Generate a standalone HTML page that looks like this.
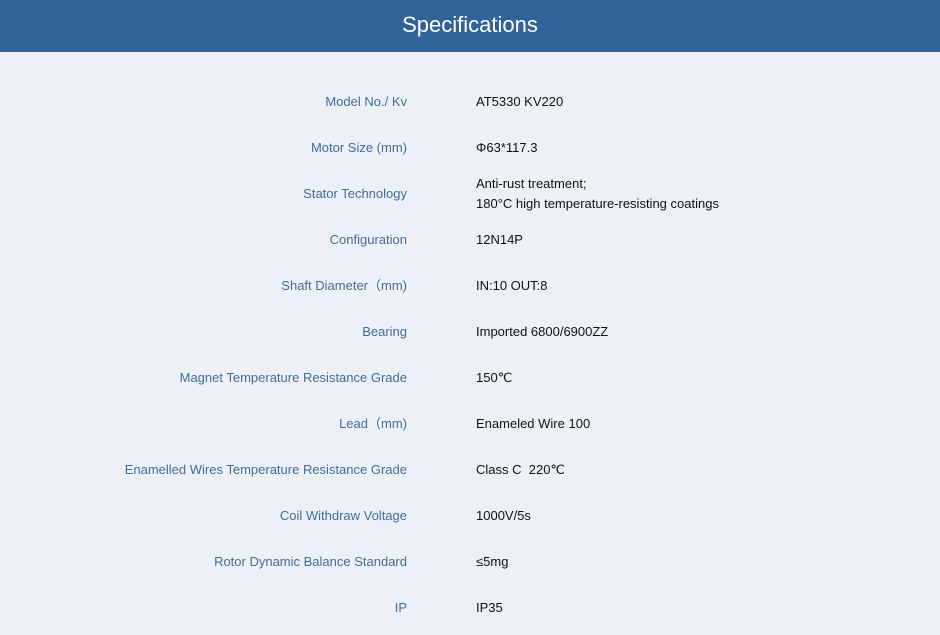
<!DOCTYPE html>
<html><head><style>
body{margin:0;width:940px;height:635px;background:#edf1f7;font-family:"Liberation Sans",sans-serif;overflow:hidden;position:relative}
.h{height:52px;background:#30639a;color:#fff;text-align:center;font-size:22px;line-height:50px}
.r{position:absolute;left:0;width:940px;height:20px;font-size:13px;line-height:20px}
.l{position:absolute;right:533px;color:#446c96;white-space:nowrap}
.v{position:absolute;left:476px;color:#111;white-space:nowrap}
</style></head><body>
<div class="h">Specifications</div>
<div class="r" style="top:92px"><span class="l">Model No./ Kv</span><span class="v">AT5330 KV220</span></div>
<div class="r" style="top:138px"><span class="l">Motor Size (mm)</span><span class="v">Φ63*117.3</span></div>
<div class="r" style="top:184px"><span class="l">Stator Technology</span><span class="v" style="top:-10px">Anti-rust treatment;</span><span class="v" style="top:10px">180°C high temperature-resisting coatings</span></div>
<div class="r" style="top:230px"><span class="l">Configuration</span><span class="v">12N14P</span></div>
<div class="r" style="top:276px"><span class="l">Shaft Diameter（mm)</span><span class="v">IN:10 OUT:8</span></div>
<div class="r" style="top:322px"><span class="l">Bearing</span><span class="v">Imported 6800/6900ZZ</span></div>
<div class="r" style="top:368px"><span class="l">Magnet Temperature Resistance Grade</span><span class="v">150℃</span></div>
<div class="r" style="top:414px"><span class="l">Lead（mm)</span><span class="v">Enameled Wire 100</span></div>
<div class="r" style="top:460px"><span class="l">Enamelled Wires Temperature Resistance Grade</span><span class="v">Class C&nbsp; 220℃</span></div>
<div class="r" style="top:506px"><span class="l">Coil Withdraw Voltage</span><span class="v">1000V/5s</span></div>
<div class="r" style="top:552px"><span class="l">Rotor Dynamic Balance Standard</span><span class="v">≤5mg</span></div>
<div class="r" style="top:598px"><span class="l">IP</span><span class="v">IP35</span></div>
</body></html>
